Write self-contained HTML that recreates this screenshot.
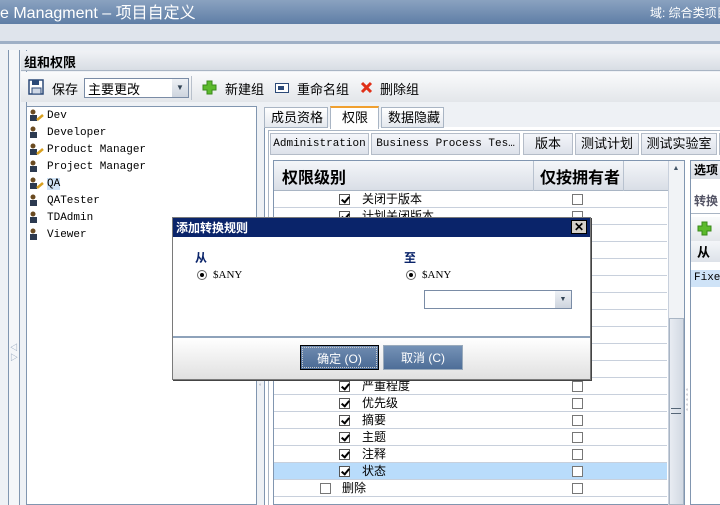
<!DOCTYPE html>
<html><head><meta charset="utf-8"><style>
*{margin:0;padding:0;box-sizing:border-box}
body{width:720px;height:505px;overflow:hidden;background:#fff;position:relative;font-family:"Liberation Sans","Noto Sans CJK SC",sans-serif;font-size:12px;color:#000}
.a{position:absolute}
.mono{font-family:"Liberation Mono","Noto Sans CJK SC",monospace;font-size:11px}
.cb{position:absolute;width:11px;height:11px;border:1px solid #555;background:#fff}
.cb.k::after{content:"";position:absolute;left:3px;top:0px;width:3px;height:6px;border:solid #000;border-width:0 2px 2px 0;transform:rotate(40deg)}
.ub{position:absolute;width:11px;height:11px;border:1px solid #777;background:#fff}
.row{position:absolute;left:274px;width:393px;height:17px;border-bottom:1px solid #c8d0dc}
.btn{position:absolute;background:linear-gradient(#f4f6fa,#dde2ea);border:1px solid #b4bcc8;text-align:center;line-height:20px}
</style></head><body>
<div class="a" style="left:0;top:0;width:720px;height:24px;background:linear-gradient(#8aa2c0,#5f7ea6)"></div>
<div class="a" style="left:0;top:-1px;color:#fff;font-size:16px">e Managment – 项目自定义</div>
<div class="a" style="left:650px;top:4px;color:#fff;font-size:12px;white-space:nowrap">域: 综合类项目</div>
<div class="a" style="left:0;top:24px;width:720px;height:18px;background:#dfe4ec"></div>
<div class="a" style="left:0;top:41px;width:720px;height:3px;background:#9fb0c6"></div>
<div class="a" style="left:0;top:44px;width:720px;height:461px;background:#eef1f5"></div>
<div class="a" style="left:8px;top:50px;width:1px;height:455px;background:#8196b0"></div>
<div class="a" style="left:19px;top:50px;width:1px;height:455px;background:#8196b0"></div>
<div class="a" style="left:9px;top:50px;width:10px;height:455px;background:#f4f6f9"></div>
<div class="a" style="left:10px;top:343px;font-size:8px;color:#7a90ac;line-height:10px">◁<br>▷</div>
<div class="a" style="left:26px;top:50px;width:1px;height:455px;background:#8196b0"></div>
<div class="a" style="left:21px;top:51px;width:699px;height:20px;background:linear-gradient(#f0f2f5,#d8dde4);border-bottom:1px solid #a9b5c4"></div>
<div class="a" style="left:24px;top:52px;font-weight:bold;font-size:13px">组和权限</div>
<div class="a" style="left:21px;top:72px;width:699px;height:30px;background:linear-gradient(#fafbfc,#e3e6ea)"></div>
<svg class="a" style="left:28px;top:79px" width="16" height="16"><rect x="1" y="1" width="14" height="14" fill="#fff" stroke="#2c4a78" stroke-width="1.5"/><rect x="4" y="1" width="7" height="5" fill="#2c4a78"/><rect x="4" y="9" width="9" height="6" fill="#cfd8e6" stroke="#2c4a78"/></svg>
<div class="a" style="left:52px;top:79px;font-size:13px">保存</div>
<div class="a" style="left:84px;top:78px;width:105px;height:20px;border:1px solid #7a8ca6;background:#fff"></div>
<div class="a" style="left:88px;top:79px;font-size:13px">主要更改</div>
<div class="a" style="left:172px;top:79px;width:16px;height:18px;background:linear-gradient(#eef1f5,#cdd4de);text-align:center;font-size:8px;line-height:18px;color:#345">▼</div>
<div class="a" style="left:191px;top:76px;width:1px;height:24px;background:#b8c0cb"></div>
<svg class="a" style="left:202px;top:80px" width="15" height="15"><path d="M5 1h5v4h4v5h-4v4H5v-4H1V5h4z" fill="#5cba2c" stroke="#3a8a1a"/></svg>
<div class="a" style="left:225px;top:79px;font-size:13px">新建组</div>
<svg class="a" style="left:275px;top:83px" width="14" height="10"><rect x="0.5" y="0.5" width="13" height="9" fill="#fff" stroke="#2c4a78"/><rect x="3" y="3" width="6" height="4" fill="#2c4a78"/></svg>
<div class="a" style="left:297px;top:79px;font-size:13px">重命名组</div>
<svg class="a" style="left:360px;top:81px" width="13" height="13"><path d="M2 2L11 11M11 2L2 11" stroke="#e03018" stroke-width="3"/></svg>
<div class="a" style="left:380px;top:79px;font-size:13px">删除组</div>
<div class="a" style="left:26px;top:106px;width:231px;height:399px;background:#fff;border:1px solid #8196b0"></div>
<div class="a mono" style="left:47px;top:108px;line-height:17px;font-size:11px">Dev<br>Developer<br>Product Manager<br>Project Manager<br><span style="background:#cfe3f7">QA</span><br>QATester<br>TDAdmin<br>Viewer</div>
<svg class="a" style="left:28px;top:109px" width="16" height="136">
<g fill="#6a4a20"><circle cx="5" cy="3" r="2.5"/><circle cx="5" cy="20" r="2.5"/><circle cx="5" cy="37" r="2.5"/><circle cx="5" cy="54" r="2.5"/><circle cx="5" cy="71" r="2.5"/><circle cx="5" cy="88" r="2.5"/><circle cx="5" cy="105" r="2.5"/><circle cx="5" cy="122" r="2.5"/></g>
<g fill="#2c3a50"><rect x="2" y="6" width="7" height="6"/><rect x="2" y="23" width="7" height="6"/><rect x="2" y="40" width="7" height="6"/><rect x="2" y="57" width="7" height="6"/><rect x="2" y="74" width="7" height="6"/><rect x="2" y="91" width="7" height="6"/><rect x="2" y="108" width="7" height="6"/><rect x="2" y="125" width="7" height="6"/></g>
<g stroke="#d8a020" stroke-width="2.5"><path d="M9 11l6-5"/><path d="M9 45l6-5"/><path d="M9 79l6-5"/></g>
</svg>
<div class="a" style="left:257px;top:102px;width:7px;height:403px;background:#eef1f5"></div>
<div class="a" style="left:259px;top:380px;font-size:6px;color:#889;line-height:5px">°<br>°</div>
<div class="a" style="left:264px;top:127px;width:456px;height:378px;background:#fff;border-left:1px solid #8196b0"></div>
<div class="a" style="left:264px;top:107px;width:64px;height:21px;background:linear-gradient(#fff,#e4e8ee);border:1px solid #a9b5c4;font-size:13px;padding-left:6px;line-height:19px">成员资格</div>
<div class="a" style="left:330px;top:106px;width:49px;height:23px;background:#fff;border:1px solid #a9b5c4;border-top:2px solid #f0a030;border-bottom:none;font-size:13px;padding-left:11px;line-height:19px">权限</div>
<div class="a" style="left:381px;top:107px;width:63px;height:21px;background:linear-gradient(#fff,#e4e8ee);border:1px solid #a9b5c4;font-size:13px;padding-left:6px;line-height:19px">数据隐藏</div>
<div class="a" style="left:268px;top:130px;width:452px;height:375px;border-left:1px solid #a9b5c4;border-top:1px solid #a9b5c4;background:#fff"></div>
<div class="btn mono" style="left:270px;top:133px;width:99px;height:22px">Administration</div>
<div class="btn mono" style="left:371px;top:133px;width:149px;height:22px">Business Process Tes…</div>
<div class="btn" style="left:523px;top:133px;width:50px;height:22px;font-size:13px">版本</div>
<div class="btn" style="left:575px;top:133px;width:64px;height:22px;font-size:13px">测试计划</div>
<div class="btn" style="left:641px;top:133px;width:76px;height:22px;font-size:13px">测试实验室</div>
<div class="a" style="left:719px;top:133px;width:1px;height:22px;background:#b4bcc8"></div>
<div class="a" style="left:273px;top:160px;width:412px;height:345px;border:1px solid #8196b0;background:#fff"></div>
<div class="a" style="left:274px;top:161px;width:394px;height:30px;background:linear-gradient(#f4f6f9,#d9dee6);border-bottom:1px solid #a9b5c4"></div>
<div class="a" style="left:533px;top:161px;width:1px;height:30px;background:#b8c2cf"></div>
<div class="a" style="left:623px;top:161px;width:1px;height:30px;background:#b8c2cf"></div>
<div class="a" style="left:282px;top:164px;font-size:16px;font-weight:bold">权限级别</div>
<div class="a" style="left:540px;top:164px;font-size:16px;font-weight:bold">仅按拥有者</div>
<div class="a" style="left:668px;top:161px;width:16px;height:344px;background:#f1f3f6;border-left:1px solid #c8d0dc"></div>
<div class="a" style="left:668px;top:161px;width:16px;height:16px;font-size:7px;text-align:center;line-height:16px;color:#456">▲</div>
<div class="a" style="left:669px;top:318px;width:15px;height:187px;background:linear-gradient(90deg,#e8ecf2,#d2d9e3);border:1px solid #a9b5c4"></div>
<div class="a" style="left:671px;top:408px;width:10px;height:6px;border-top:1px solid #567;border-bottom:1px solid #567"></div>
<div class="row" style="top:191px"></div><div class="row" style="top:208px"></div><div class="row" style="top:225px"></div><div class="row" style="top:242px"></div><div class="row" style="top:259px"></div><div class="row" style="top:276px"></div><div class="row" style="top:293px"></div><div class="row" style="top:310px"></div><div class="row" style="top:327px"></div><div class="row" style="top:344px"></div><div class="row" style="top:361px"></div><div class="row" style="top:378px"></div><div class="row" style="top:395px"></div><div class="row" style="top:412px"></div><div class="row" style="top:429px"></div><div class="row" style="top:446px"></div><div class="row" style="top:463px;background:#b9dcfb"></div><div class="row" style="top:480px"></div>
<div class="a" style="left:362px;top:191px;line-height:17px;font-size:12px">关闭于版本<br>计划关闭版本<br><br><br><br><br><br><br><br><br><br>严重程度<br>优先级<br>摘要<br>主题<br>注释<br>状态</div>
<div class="a" style="left:342px;top:480px;line-height:17px;font-size:12px">删除</div>
<div class="cb k" style="left:339px;top:194px"></div><div class="cb k" style="left:339px;top:211px"></div>
<div class="cb k" style="left:339px;top:381px"></div><div class="cb k" style="left:339px;top:398px"></div><div class="cb k" style="left:339px;top:415px"></div><div class="cb k" style="left:339px;top:432px"></div><div class="cb k" style="left:339px;top:449px"></div><div class="cb k" style="left:339px;top:466px"></div>
<div class="ub" style="left:320px;top:483px"></div>
<div class="ub" style="left:572px;top:194px"></div><div class="ub" style="left:572px;top:211px"></div><div class="ub" style="left:572px;top:381px"></div><div class="ub" style="left:572px;top:398px"></div><div class="ub" style="left:572px;top:415px"></div><div class="ub" style="left:572px;top:432px"></div><div class="ub" style="left:572px;top:449px"></div><div class="ub" style="left:572px;top:466px"></div><div class="ub" style="left:572px;top:483px"></div>
<div class="a" style="left:686px;top:390px;font-size:6px;color:#889;line-height:5px">°<br>°<br>°<br>°<br>°</div>
<div class="a" style="left:690px;top:160px;width:30px;height:345px;border:1px solid #8196b0;border-right:none;background:#fff"></div>
<div class="a" style="left:691px;top:161px;width:29px;height:18px;background:linear-gradient(#f0f2f5,#d8dde4)"></div>
<div class="a" style="left:694px;top:161px;font-weight:bold;font-size:12px">选项</div>
<div class="a" style="left:694px;top:192px;font-weight:bold;font-size:12px;color:#556">转换</div>
<div class="a" style="left:691px;top:213px;width:29px;height:1px;background:#a9b5c4"></div>
<div class="a" style="left:691px;top:217px;width:29px;height:24px;background:linear-gradient(#fafbfc,#e3e6ea)"></div>
<svg class="a" style="left:697px;top:221px" width="15" height="15"><path d="M5 1h5v4h4v5h-4v4H5v-4H1V5h4z" fill="#5cba2c" stroke="#3a8a1a"/></svg>
<div class="a" style="left:691px;top:241px;width:29px;height:21px;background:linear-gradient(#f4f6f9,#dde2e9)"></div>
<div class="a" style="left:697px;top:242px;font-weight:bold;font-size:13px">从</div>
<div class="a mono" style="left:691px;top:270px;width:29px;height:17px;background:#cfe3f7;padding-left:3px;line-height:17px">Fixed</div>
<div class="a" style="left:172px;top:217px;width:419px;height:163px;background:#fff;border:1px solid #7a7a7a;box-shadow:1px 1px 0 #444"></div>
<div class="a" style="left:173px;top:218px;width:417px;height:19px;background:#0a246a"></div>
<div class="a" style="left:176px;top:219px;color:#fff;font-weight:bold;font-size:12px">添加转换规则</div>
<div class="a" style="left:571px;top:220px;width:16px;height:14px;background:#d4d0c8;border:1px solid #000;font-size:12px;line-height:12px;text-align:center;font-weight:bold">✕</div>
<div class="a" style="left:195px;top:249px;color:#0a246a;font-weight:bold;font-size:12px">从</div>
<div class="a" style="left:404px;top:249px;color:#0a246a;font-weight:bold;font-size:12px">至</div>
<div class="a" style="left:197px;top:270px;width:10px;height:10px;border-radius:50%;border:1px solid #666;background:#fff"><div style="width:4px;height:4px;background:#000;border-radius:50%;margin:2px"></div></div>
<div class="a" style="left:406px;top:270px;width:10px;height:10px;border-radius:50%;border:1px solid #666;background:#fff"><div style="width:4px;height:4px;background:#000;border-radius:50%;margin:2px"></div></div>
<div class="a" style="left:213px;top:269px;font-family:'Liberation Serif',serif;font-size:11px">$ANY</div>
<div class="a" style="left:422px;top:269px;font-family:'Liberation Serif',serif;font-size:11px">$ANY</div>
<div class="a" style="left:424px;top:290px;width:148px;height:19px;border:1px solid #7a8ca6;background:#fff"></div>
<div class="a" style="left:555px;top:291px;width:16px;height:17px;background:linear-gradient(#eef1f5,#cdd4de);font-size:7px;text-align:center;line-height:17px;color:#345">▼</div>
<div class="a" style="left:173px;top:336px;width:417px;height:2px;background:#8ea2ba"></div>
<div class="a" style="left:173px;top:338px;width:417px;height:41px;background:linear-gradient(#fff,#e0e0e0)"></div>
<div class="a" style="left:300px;top:345px;width:79px;height:25px;border:1px solid #000;background:linear-gradient(#6f8bb0,#4a6a94);color:#fff;text-align:center;line-height:22px;font-size:12px"><div style="border:1px dotted #ccc;margin:1px;height:21px">确定 (O)</div></div>
<div class="a" style="left:383px;top:345px;width:80px;height:25px;border:1px solid #9ab;background:linear-gradient(#7592b6,#4e6e98);color:#fff;text-align:center;line-height:24px;font-size:12px">取消 (C)</div>
</body></html>
